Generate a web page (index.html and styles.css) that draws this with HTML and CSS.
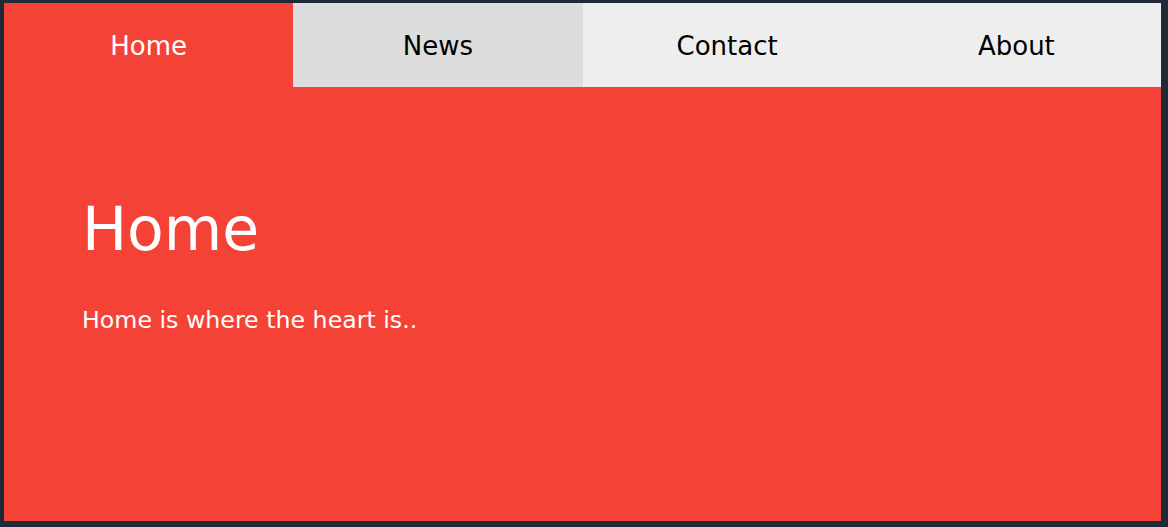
FILE: index.html
```html
<!DOCTYPE html>
<html>
<head>
<meta charset="utf-8">
<link rel="stylesheet" href="styles.css">
</head>
<body>
<div class="app">
  <nav class="tabs">
    <button class="tab active">Home</button>
    <button class="tab hover">News</button>
    <button class="tab">Contact</button>
    <button class="tab">About</button>
  </nav>
  <section class="panel">
    <h1>Home</h1>
    <p>Home is where the heart is..</p>
  </section>
</div>
</body>
</html>
```
FILE: styles.css
```css
html, body { height: 100%; }
body {
  margin: 0;
  background: #1f2a36;
  box-sizing: border-box;
  padding: 3px 7px 6px 4px;
  font-family: "DejaVu Sans", Verdana, sans-serif;
}
.app {
  height: 100%;
  display: flex;
  flex-direction: column;
  background: #f44336;
}
.tabs {
  display: grid;
  grid-template-columns: repeat(4, 1fr);
  height: 84px;
}
.tab {
  border: none;
  margin: 0;
  padding: 2px 0 0;
  background: #eee;
  color: #000;
  font-family: inherit;
  font-size: 26px;
}
.tab.active { background: #f44336; color: #fff; }
.tab.hover { background: #ddd; }
.panel {
  flex: 1;
  color: #fff;
  padding: 0 78px;
}
.panel h1 {
  margin: 112px 0 0;
  font-size: 60px;
  font-weight: normal;
  line-height: 1;
}
.panel p {
  margin: 50px 0 0;
  font-size: 23.7px;
  line-height: 1;
}
```
